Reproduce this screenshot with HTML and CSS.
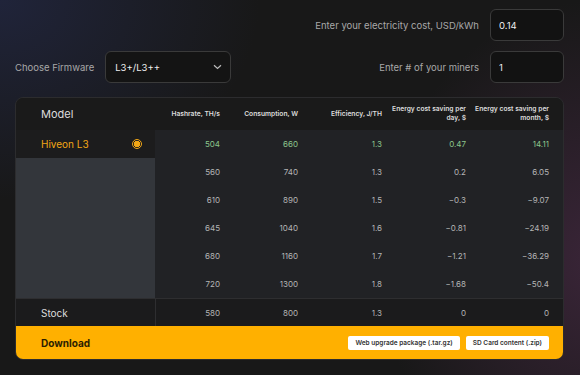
FILE: index.html
```html
<!DOCTYPE html>
<html lang="en">
<head>
    <meta charset="UTF-8">
    <meta name="viewport" content="width=device-width, initial-scale=1.0">
    <title>Firmware savings</title>
    <link rel="stylesheet" href="styles.css">
</head>
<body>

    <div class="page">
        <div class="controls">
            <div class="control-row end">
                <label class="field-label" for="cost">Enter your electricity cost, USD/kWh</label>
                <input class="field" id="cost" type="text" value="0.14">
            </div>
            <div class="control-row">
                <div class="firmware">
                    <span class="field-label">Choose Firmware</span>
                    <div class="select">
                        <span>L3+/L3++</span>
                        <svg width="9" height="6" viewBox="0 0 9 6"><path d="M1 1.2l3.5 3.3L8 1.2" fill="none" stroke="#bbb" stroke-width="1.2"/></svg>
                    </div>
                </div>
                <div class="miners">
                    <label class="field-label" for="miners">Enter # of your miners</label>
                    <input class="field" id="miners" type="text" value="1">
                </div>
            </div>
        </div>

        <div class="card">
            <table>
                <colgroup>
                    <col class="c-model">
                    <col class="c-hash">
                    <col class="c-cons">
                    <col class="c-eff">
                    <col class="c-day">
                    <col class="c-month">
                </colgroup>
                <thead>
                    <tr>
                        <th class="model">Model</th>
                        <th>Hashrate, TH/s</th>
                        <th>Consumption, W</th>
                        <th>Efficiency, J/TH</th>
                        <th>Energy cost saving per<br>day, $</th>
                        <th class="last">Energy cost saving per<br>month, $</th>
                    </tr>
                </thead>
                <tbody>
                    <tr class="active">
                        <td class="model">
                            <div class="model-inner">
                                <span>Hiveon L3</span>
                                <span class="radio"></span>
                            </div>
                        </td>
                        <td>504</td><td>660</td><td>1.3</td><td>0.47</td><td class="last">14.11</td>
                    </tr>
                    <tr>
                        <td class="blank" rowspan="5"></td>
                        <td>560</td><td>740</td><td>1.3</td><td>0.2</td><td class="last">6.05</td>
                    </tr>
                    <tr><td>610</td><td>890</td><td>1.5</td><td>−0.3</td><td class="last">−9.07</td></tr>
                    <tr><td>645</td><td>1040</td><td>1.6</td><td>−0.81</td><td class="last">−24.19</td></tr>
                    <tr><td>680</td><td>1160</td><td>1.7</td><td>−1.21</td><td class="last">−36.29</td></tr>
                    <tr><td>720</td><td>1300</td><td>1.8</td><td>−1.68</td><td class="last">−50.4</td></tr>
                    <tr class="stock">
                        <td class="model">Stock</td>
                        <td>580</td><td>800</td><td>1.3</td><td>0</td><td class="last">0</td>
                    </tr>
                </tbody>
            </table>
            <div class="download">
                <span class="download-title">Download</span>
                <div class="download-links">
                    <a href="#">Web upgrade package (.tar.gz)</a>
                    <a href="#">SD Card content (.zip)</a>
                </div>
            </div>
        </div>
    </div>

</body>
</html>
```

FILE: styles.css
```css
body {
    margin: 0;
    height: 375px;
    font-family: Inter, "Noto Sans", sans-serif;
    color: #ddd;
    background:
        radial-gradient(ellipse 260px 200px at 0 0, #20243a 0%, rgba(32, 36, 58, 0) 100%),
        radial-gradient(ellipse 220px 260px at 600px 260px, #3a2538 0%, rgba(58, 37, 56, 0) 100%),
        #181818;
    overflow: hidden;
}
.page {
    padding: 9px 16px 0 15px;
}
.controls {
    display: flex;
    flex-direction: column;
    gap: 10px;
}
.control-row {
    display: flex;
    justify-content: space-between;
    align-items: center;
}
.control-row.end {
    justify-content: flex-end;
    gap: 11px;
}
.firmware, .miners {
    display: flex;
    align-items: center;
    gap: 11px;
}
.field-label {
    font-size: 9.5px;
    color: #a8a8a8;
}
.field {
    box-sizing: border-box;
    width: 74px;
    height: 32px;
    padding: 0 0 0 8px;
    border: 1px solid #3a3a3a;
    border-radius: 6px;
    background: #121212;
    color: #eee;
    font-family: inherit;
    font-size: 9.5px;
}
.select {
    box-sizing: border-box;
    width: 126px;
    height: 32px;
    padding: 0 8px 0 9px;
    display: flex;
    align-items: center;
    justify-content: space-between;
    border: 1px solid #3a3a3a;
    border-radius: 6px;
    background: #141414;
    font-size: 9.5px;
    color: #eee;
}

.card {
    margin-top: 14px;
    border: 1px solid #2c2c2e;
    border-radius: 8px;
    overflow: hidden;
    background: #212225;
}
table {
    width: 100%;
    border-collapse: collapse;
    table-layout: fixed;
}
.c-model { width: 139px; }
.c-hash { width: 65px; }
.c-cons { width: 78px; }
.c-eff { width: 84px; }
.c-day { width: 84px; }
th, td {
    padding: 0;
    text-align: right;
}
th {
    height: 32px;
    background: #1a1a1a;
    font-size: 6.7px;
    font-weight: 600;
    color: #ddd;
    line-height: 1.3;
}
th.model {
    text-align: left;
    padding-left: 25px;
    font-size: 11px;
    font-weight: 400;
}
th.last, td.last {
    padding-right: 14px;
}
td {
    height: 28px;
    font-size: 8px;
    color: #b5b5b5;
}
td.model {
    text-align: left;
    padding-left: 25px;
    padding-right: 13px;
    font-size: 10px;
    background: #1c1c1d;
}
.model-inner {
    display: flex;
    align-items: center;
    justify-content: space-between;
}
.active td.model {
    color: #f2a716;
}
.active td {
    color: #8cc68c;
}
.radio {
    width: 8px;
    height: 8px;
    border: 1.5px solid #f2a716;
    border-radius: 50%;
    background: radial-gradient(circle, #f2a716 0 3px, transparent 3.3px);
}
td.blank {
    background: #33363b;
}
.stock td {
    height: 27px;
    background: #1b1b1c;
    border-top: 1px solid #2e2e30;
}
.stock td.model {
    color: #ddd;
    border-right: 1px solid #2e2e30;
}

.download {
    height: 33px;
    display: flex;
    align-items: center;
    justify-content: space-between;
    padding: 0 14px 0 25px;
    background: #ffb000;
}
.download-title {
    font-size: 10px;
    font-weight: 700;
    color: #2b1d00;
}
.download-links {
    display: flex;
    gap: 6px;
}
.download-links a {
    display: block;
    height: 14px;
    line-height: 14px;
    padding: 0 7px;
    background: #fff;
    border-radius: 2px;
    font-size: 6.5px;
    font-weight: 600;
    color: #333;
    text-decoration: none;
}
```
